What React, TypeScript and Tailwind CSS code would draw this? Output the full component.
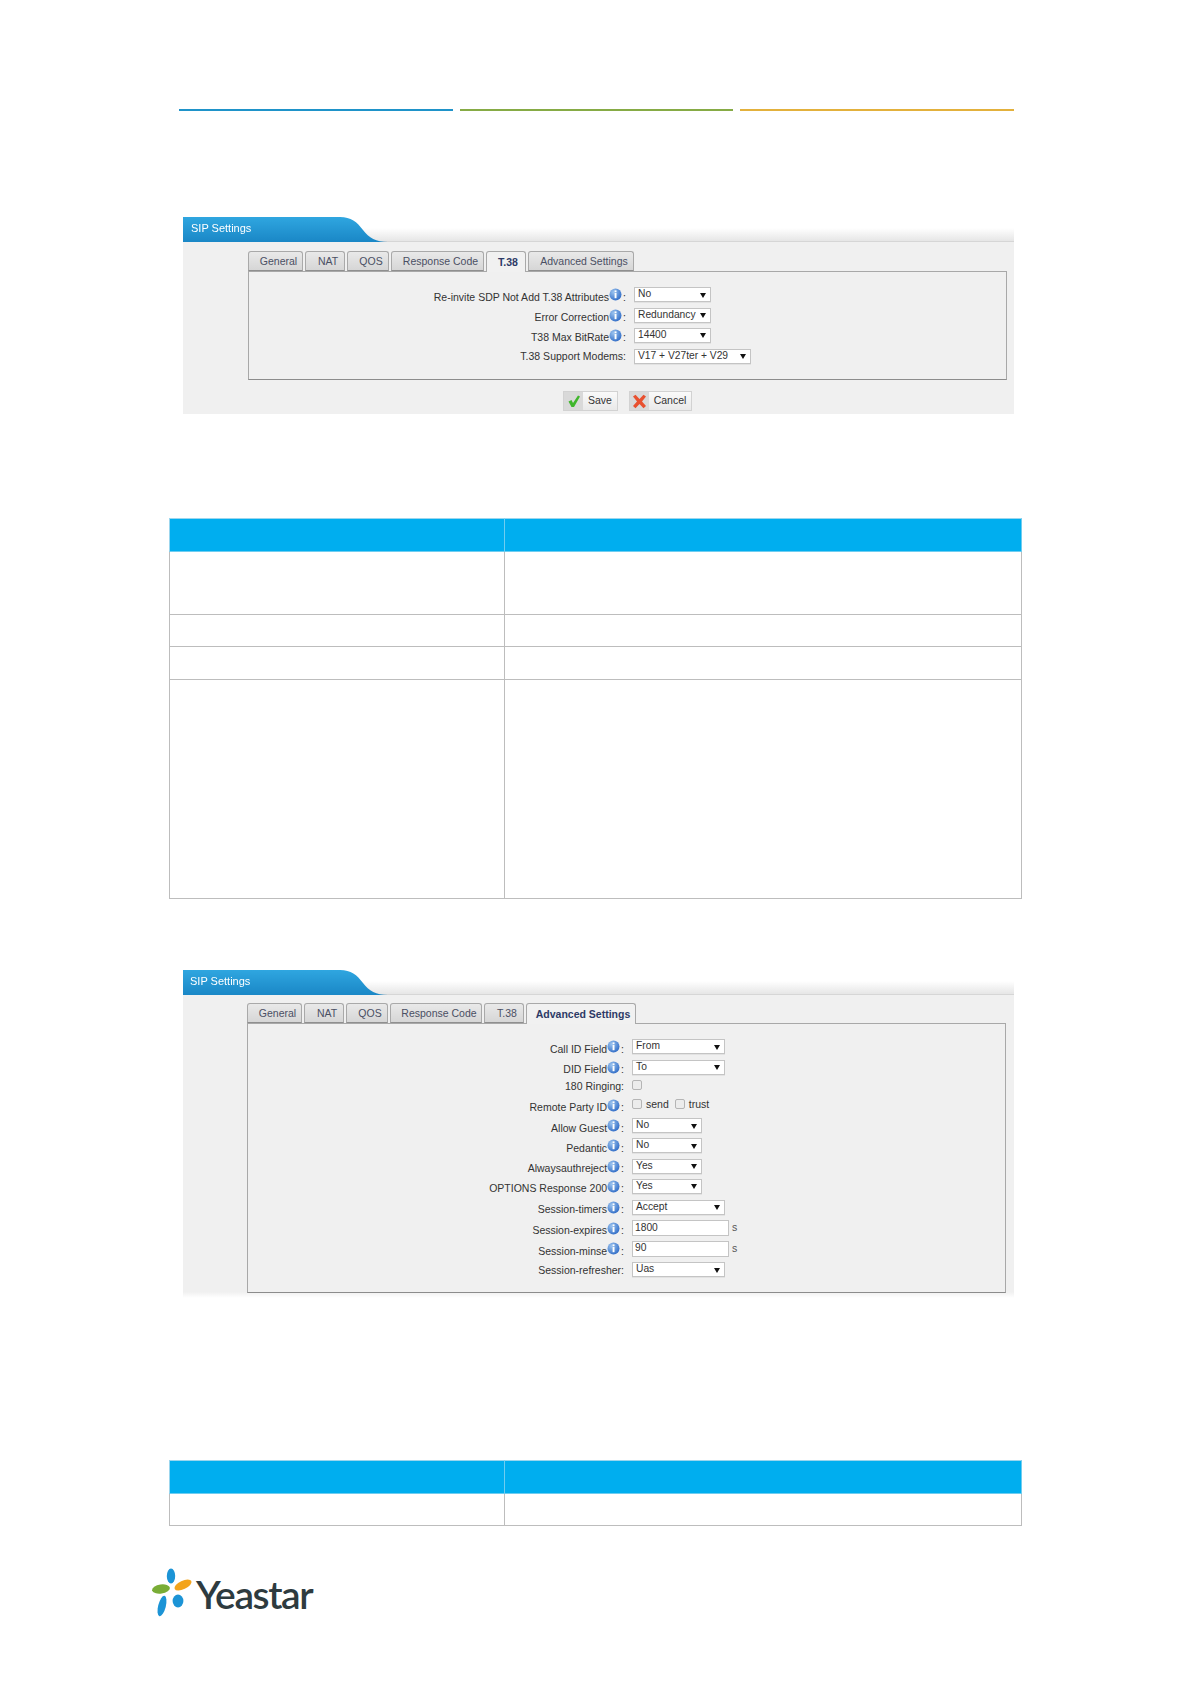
const font = "font-['Liberation_Sans',Arial,sans-serif]";

function Info() {
  return (
    <svg width="13" height="13" viewBox="0 0 13 13" className="shrink-0">
      <defs>
        <radialGradient id="ig" cx="35%" cy="30%" r="80%">
          <stop offset="0%" stopColor="#9cc4ef" />
          <stop offset="100%" stopColor="#2a67c4" />
        </radialGradient>
      </defs>
      <circle cx="6.5" cy="6.5" r="6" fill="url(#ig)" />
      <rect x="5.6" y="2.4" width="1.9" height="1.8" fill="#fff" />
      <rect x="5.6" y="5" width="1.9" height="5.2" fill="#fff" />
    </svg>
  );
}

function Select({ value, w }: { value: string; w: string }) {
  return (
    <div className={`${w} h-[15px] bg-white border border-[#c4c4c4] flex items-center justify-between pl-[3px] pr-[4px] text-[10.25px] leading-none text-[#333] shadow-[0_1px_0_#e2e2e2]`}>
      <span>{value}</span>
      <svg width="6" height="6" viewBox="0 0 6 6" className="shrink-0">
        <path d="M0 1h6L3 6z" fill="#111" />
      </svg>
    </div>
  );
}

function Input({ value }: { value: string }) {
  return (
    <div className="flex items-center">
      <div className="w-[97px] h-[16px] bg-white border border-[#c4c4c4] flex items-center pl-[2px] text-[10.25px] leading-none text-[#333]">
        {value}
      </div>
      <span className="ml-[3px] text-[10.5px] text-[#555]">s</span>
    </div>
  );
}

function Check({ label }: { label?: string }) {
  return (
    <div className="flex items-center mr-[6px]">
      <div className="w-[10px] h-[10px] mb-[2px] rounded-[2px] border border-[#b5b5b5] bg-[#ececec]" />
      {label && <span className="ml-[4px] text-[10.5px] text-[#333]">{label}</span>}
    </div>
  );
}

type Row = { label: string; info?: boolean; h: string; control: React.ReactNode };

function FormRow({ label, info, h, control, labelW }: Row & { labelW: string }) {
  return (
    <div className={`flex items-center ${h}`}>
      <div className={`${labelW} flex justify-end items-center text-[10.5px] leading-none text-[#333]`}>
        <span className={info ? "pt-[5px]" : "pt-[1px]"}>{label}</span>
        {info && <Info />}
        <span className={info ? "pt-[5px] ml-[1px]" : "pt-[1px]"}>:</span>
      </div>
      <div className="ml-[8px] flex items-center">{control}</div>
    </div>
  );
}

function Tab({ label, w, active }: { label: string; w: string; active?: boolean }) {
  return (
    <div
      className={`${w} flex items-center justify-center rounded-t-[3px] border border-[#a9a9a9] text-[10.5px] leading-none ${
        active
          ? "h-[21px] -mb-px border-b-0 bg-[#f1f1f1] text-[#2d3a66] font-bold pl-[4px]"
          : "h-[20px] bg-gradient-to-b from-[#e9e9e9] to-[#d6d6d6] text-[#4a4f63] border-b-[#8f8f8f] pl-[6px]"
      }`}
    >
      {label}
    </div>
  );
}

function Panel({
  title,
  titlePad,
  tabs,
  children,
  boxClass,
  footer,
  bodyClass,
  tabsPad,
}: {
  title: string;
  titlePad: string;
  tabs: React.ReactNode;
  children: React.ReactNode;
  boxClass: string;
  footer?: React.ReactNode;
  bodyClass: string;
  tabsPad: string;
}) {
  return (
    <div className={`ml-[183px] w-[831px] ${font} blur-[0.35px]`}>
      <div className="relative h-[25px] pt-[11px]">
        <div className="h-[14px] bg-gradient-to-b from-white to-[#e6e6e6] border-b border-[#d6d6d6]" />
        <div className="absolute left-0 top-0 w-[205px] h-[25px]">
          <svg className="absolute inset-0" width="205" height="25" viewBox="0 0 205 25">
            <defs>
              <linearGradient id="tg" x1="0" y1="0" x2="0" y2="1">
                <stop offset="0%" stopColor="#2fa6e0" />
                <stop offset="100%" stopColor="#1a87c6" />
              </linearGradient>
            </defs>
            <path d="M0 0H157C168 0 174 5 180 13C186 21 193 25 205 25H0Z" fill="url(#tg)" />
          </svg>
          <div className={`relative ${titlePad} leading-[23px] text-[11px] text-white`}>{title}</div>
        </div>
      </div>
      <div className={`${bodyClass} ${tabsPad}`}>
        <div className="flex gap-[2px] items-end relative">{tabs}</div>
        <div className={`border border-[#a8a8a8] border-b-[#8c8c8c] ${boxClass}`}>{children}</div>
        {footer}
      </div>
    </div>
  );
}

function Btn({ label, kind, w }: { label: string; kind: "ok" | "no"; w: string }) {
  return (
    <div className={`${w} h-[20px] flex border border-[#d2d2d2] bg-gradient-to-b from-[#fafafa] to-[#e9e9e9] text-[10.5px] text-[#333]`}>
      <div className="w-[19px] bg-[#d9d9d9] flex items-center justify-center shrink-0">
        {kind === "ok" ? (
          <svg width="14" height="14" viewBox="0 0 14 14">
            <path d="M1.5 7.5 L4.5 6 L6 9 L11 1.5 L13 2.5 L7 13 L4.5 13Z" fill="#3fb62c" />
          </svg>
        ) : (
          <svg width="15" height="15" viewBox="0 0 15 15">
            <path d="M1 2.5 L3.5 .8 L7.5 5 L11.5 .8 L14 2.5 L10 7.5 L14 12 L11.5 14.2 L7.5 10 L3.5 14.2 L1 12 L5 7.5Z" fill="#e8502f" />
          </svg>
        )}
      </div>
      <div className="flex-1 flex items-center justify-center">{label}</div>
    </div>
  );
}

function TableRow({ h, head }: { h: string; head?: boolean }) {
  const cell = head
    ? "bg-[#00aeef] border-r border-b border-[#6fcdf0]"
    : "bg-white border-r border-b border-[#bdbdbd]";
  const first = head ? "border-l border-l-[#9bd6ee] border-t border-t-[#9bd6ee]" : "border-l border-l-[#bdbdbd]";
  const second = head ? "border-t border-t-[#9bd6ee]" : "";
  return (
    <div className={`grid grid-cols-[336px_1fr] ${h}`}>
      <div className={`${cell} ${first}`} />
      <div className={`${cell} ${second}`} />
    </div>
  );
}

function Logo() {
  return (
    <div className="ml-[150px] mt-[39px] flex items-center">
      <svg width="48" height="54" viewBox="0 0 48 54" className="shrink-0">
        <ellipse cx="21" cy="11" rx="4.2" ry="7.5" fill="#1c94d6" />
        <ellipse cx="11" cy="24" rx="9" ry="4.6" fill="#79ad36" transform="rotate(-8 11 24)" />
        <ellipse cx="33" cy="20" rx="9.2" ry="4.2" fill="#f3a41c" transform="rotate(-25 33 20)" />
        <ellipse cx="28" cy="36" rx="5.4" ry="6.4" fill="#1c94d6" />
        <ellipse cx="12" cy="41" rx="3.8" ry="10.5" fill="#1c94d6" transform="rotate(14 12 41)" />
      </svg>
      <span className="ml-[-2px] mt-[4px] font-['Lato',sans-serif] font-semibold text-[39px] leading-none tracking-[-1.4px] text-[#2e3b3f]">
        Yeastar
      </span>
    </div>
  );
}

export default function App() {
  const rows1: Row[] = [
    { label: "Re-invite SDP Not Add T.38 Attributes", info: true, h: "h-[21px]", control: <Select value="No" w="w-[77px]" /> },
    { label: "Error Correction", info: true, h: "h-[20px]", control: <Select value="Redundancy" w="w-[77px]" /> },
    { label: "T38 Max BitRate", info: true, h: "h-[20px]", control: <Select value="14400" w="w-[77px]" /> },
    { label: "T.38 Support Modems", h: "h-[22px]", control: <Select value="V17 + V27ter + V29" w="w-[117px]" /> },
  ];
  const rows2: Row[] = [
    { label: "Call ID Field", info: true, h: "h-[21px]", control: <Select value="From" w="w-[93px]" /> },
    { label: "DID Field", info: true, h: "h-[20px]", control: <Select value="To" w="w-[93px]" /> },
    { label: "180 Ringing", h: "h-[17px]", control: <Check /> },
    { label: "Remote Party ID", info: true, h: "h-[22px]", control: <><Check label="send" /><Check label="trust" /></> },
    { label: "Allow Guest", info: true, h: "h-[19px]", control: <Select value="No" w="w-[70px]" /> },
    { label: "Pedantic", info: true, h: "h-[21px]", control: <Select value="No" w="w-[70px]" /> },
    { label: "Alwaysauthreject", info: true, h: "h-[20px]", control: <Select value="Yes" w="w-[70px]" /> },
    { label: "OPTIONS Response 200", info: true, h: "h-[20px]", control: <Select value="Yes" w="w-[70px]" /> },
    { label: "Session-timers", info: true, h: "h-[22px]", control: <Select value="Accept" w="w-[93px]" /> },
    { label: "Session-expires", info: true, h: "h-[20px]", control: <Input value="1800" /> },
    { label: "Session-minse", info: true, h: "h-[21px]", control: <Input value="90" /> },
    { label: "Session-refresher", h: "h-[21px]", control: <Select value="Uas" w="w-[93px]" /> },
  ];

  return (
    <div className="w-[1191px] h-[1684px] bg-white overflow-hidden">
      <div className="pt-[109px] ml-[179px] flex gap-[7px]">
        <div className="w-[273.5px] h-[2px] bg-[#1f93c9]" />
        <div className="w-[273.5px] h-[2px] bg-[#86ab45]" />
        <div className="w-[273.5px] h-[2px] bg-[#e3b13c]" />
      </div>

      <div className="mt-[106px]">
        <Panel
          title="SIP Settings"
          titlePad="pl-[8px]"
          bodyClass="h-[172px] bg-[#f0f0f0] pt-[9px]"
          tabsPad="pl-[65px] pr-[7px]"
          boxClass="h-[109px] pt-[12px]"
          tabs={
            <>
              <Tab label="General" w="w-[55px]" />
              <Tab label="NAT" w="w-[40px]" />
              <Tab label="QOS" w="w-[42px]" />
              <Tab label="Response Code" w="w-[93px]" />
              <Tab label="T.38" w="w-[40px]" active />
              <Tab label="Advanced Settings" w="w-[106px]" />
            </>
          }
          footer={
            <div className="mt-[11px] flex justify-center gap-[11px]">
              <Btn label="Save" kind="ok" w="w-[55px]" />
              <Btn label="Cancel" kind="no" w="w-[63px]" />
            </div>
          }
        >
          {rows1.map((r) => (
            <FormRow key={r.label} labelW="w-[377px]" {...r} />
          ))}
        </Panel>
      </div>

      <div className="mt-[104px] ml-[169px] w-[853px]">
        <TableRow h="h-[34px]" head />
        <TableRow h="h-[63px]" />
        <TableRow h="h-[32px]" />
        <TableRow h="h-[33px]" />
        <TableRow h="h-[219px]" />
      </div>

      <div className="mt-[71px]">
        <Panel
          title="SIP Settings"
          titlePad="pl-[7px]"
          bodyClass="h-[303px] pt-[8px] bg-gradient-to-b from-[#f0f0f0] from-[98%] to-white"
          tabsPad="pl-[64px] pr-[8px]"
          boxClass="h-[270px] pt-[12px]"
          tabs={
            <>
              <Tab label="General" w="w-[55px]" />
              <Tab label="NAT" w="w-[40px]" />
              <Tab label="QOS" w="w-[42px]" />
              <Tab label="Response Code" w="w-[92px]" />
              <Tab label="T.38" w="w-[40px]" />
              <Tab label="Advanced Settings" w="w-[110px]" active />
            </>
          }
        >
          {rows2.map((r) => (
            <FormRow key={r.label} labelW="w-[376px]" {...r} />
          ))}
        </Panel>
      </div>

      <div className="mt-[162px] ml-[169px] w-[853px]">
        <TableRow h="h-[34px]" head />
        <TableRow h="h-[32px]" />
      </div>

      <Logo />
    </div>
  );
}
